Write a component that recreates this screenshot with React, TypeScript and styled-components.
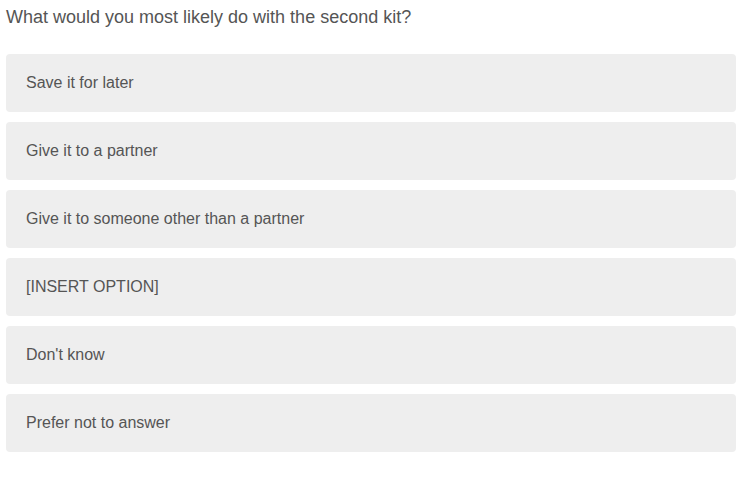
import styled, { createGlobalStyle } from "styled-components";

const GlobalStyle = createGlobalStyle`
  body {
    margin: 0;
    background: #ffffff;
    font-family: "Liberation Sans", Arial, sans-serif;
  }
`;

const Page = styled.div`
  padding: 6px 8px 0 6px;
`;

const Question = styled.div`
  font-size: 18px;
  line-height: 22px;
  color: #555555;
  margin-bottom: 26px;
`;

const OptionList = styled.div`
  display: flex;
  flex-direction: column;
  gap: 10px;
`;

const Option = styled.button`
  display: flex;
  align-items: center;
  height: 58px;
  width: 100%;
  padding: 0 20px;
  border: none;
  border-radius: 4px;
  background: #eeeeee;
  color: #555555;
  font-family: "Liberation Sans", Arial, sans-serif;
  font-size: 16px;
  text-align: left;
  cursor: pointer;
`;

const options = [
  "Save it for later",
  "Give it to a partner",
  "Give it to someone other than a partner",
  "[INSERT OPTION]",
  "Don't know",
  "Prefer not to answer",
];

export default function App() {
  return (
    <>
      <GlobalStyle />
      <Page>
        <Question>What would you most likely do with the second kit?</Question>
        <OptionList>
          {options.map((label) => (
            <Option key={label}>{label}</Option>
          ))}
        </OptionList>
      </Page>
    </>
  );
}
